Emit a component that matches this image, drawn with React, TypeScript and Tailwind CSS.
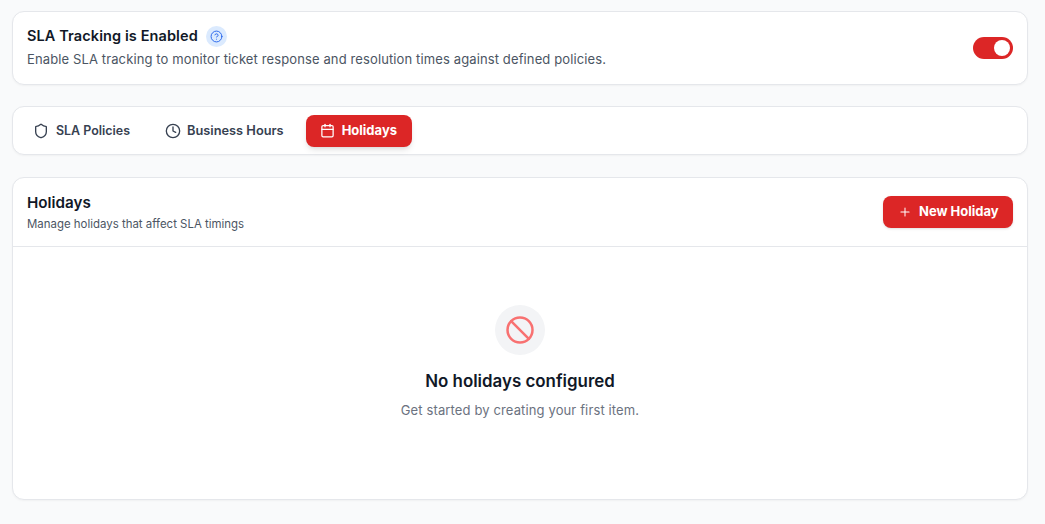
import { Shield, Clock, Calendar, Plus, Ban, CircleHelp } from "lucide-react";

export default function App() {
  return (
    <div className="min-h-[524px] bg-[#f9fafb] pl-3 pr-[17px] pt-3 pb-6 font-['Inter',sans-serif] flex flex-col">
      <div className="h-[74px] -mt-px bg-white border border-[#e5e7eb] rounded-xl shadow-[0_1px_2px_rgba(0,0,0,0.04)] flex items-center justify-between pl-[14px] pr-[14px]">
        <div className="flex flex-col -mt-[4px]">
          <div className="flex items-center gap-2 h-[26px]">
            <span className="text-[14.5px] font-semibold text-[#111827] tracking-[0.1px]">SLA Tracking is Enabled</span>
            <span className="w-[21px] h-[21px] rounded-full bg-[#dbeafe] flex items-center justify-center">
              <CircleHelp className="w-[13px] h-[13px] text-[#2563eb]" strokeWidth={1.75} />
            </span>
          </div>
          <p className="text-[13px] text-[#4b5563] leading-5 tracking-[0.12px]">Enable SLA tracking to monitor ticket response and resolution times against defined policies.</p>
        </div>
        <div className="w-10 h-[22px] rounded-full bg-[#dc2626] flex items-center justify-end pr-[3px]">
          <span className="w-4 h-4 rounded-full bg-white" />
        </div>
      </div>

      <div className="mt-[21px] h-[49px] bg-white border border-[#e5e7eb] rounded-xl shadow-[0_1px_2px_rgba(0,0,0,0.04)] flex items-center pl-2 gap-[10px]">
        <div className="flex items-center gap-[7px] pl-3 pr-[13px] h-8 text-[#374151]">
          <Shield className="w-4 h-4" strokeWidth={2} />
          <span className="text-[12.45px] font-semibold pt-px">SLA Policies</span>
        </div>
        <div className="flex items-center gap-1.5 px-3 h-8 text-[#374151]">
          <Clock className="w-4 h-4" strokeWidth={2} />
          <span className="text-[12.8px] font-semibold pt-px">Business Hours</span>
        </div>
        <div className="flex items-center gap-[7px] pl-[14px] h-8 rounded-lg bg-[#dc2626] text-white shadow-md w-[106px]">
          <Calendar className="w-[15px] h-[15px]" strokeWidth={2} />
          <span className="text-[13px] font-bold pt-px">Holidays</span>
        </div>
      </div>

      <div className="mt-[22px] h-[323px] bg-white border border-[#e5e7eb] rounded-xl shadow-[0_1px_2px_rgba(0,0,0,0.04)] flex flex-col">
        <div className="h-[69px] shrink-0 border-b border-[#e5e7eb] flex items-center justify-between pl-[14px] pr-[14px]">
          <div className="flex flex-col -mt-[2px]">
            <span className="text-[15.2px] font-semibold text-[#111827] leading-6">Holidays</span>
            <span className="text-[11.45px] text-[#4b5563] leading-4 mt-[1px]">Manage holidays that affect SLA timings</span>
          </div>
          <div className="w-[130px] h-8 rounded-lg bg-[#dc2626] text-white flex items-center pl-[15px] gap-[7px] shadow-sm">
            <Plus className="w-[14px] h-[14px]" strokeWidth={1.75} />
            <span className="text-[13px] font-bold">New Holiday</span>
          </div>
        </div>
        <div className="flex-1 flex flex-col items-center pt-[58px]">
          <div className="w-[50px] h-[50px] rounded-full bg-[#f3f4f6] flex items-center justify-center">
            <Ban className="w-[30px] h-[30px] text-[#f87171]" strokeWidth={2} />
          </div>
          <h3 className="mt-[14px] text-[16.9px] font-semibold text-[#111827] leading-6">No holidays configured</h3>
          <p className="mt-[7px] text-[13px] text-[#6b7280] leading-5 tracking-[0.13px]">Get started by creating your first item.</p>
        </div>
      </div>
    </div>
  );
}
